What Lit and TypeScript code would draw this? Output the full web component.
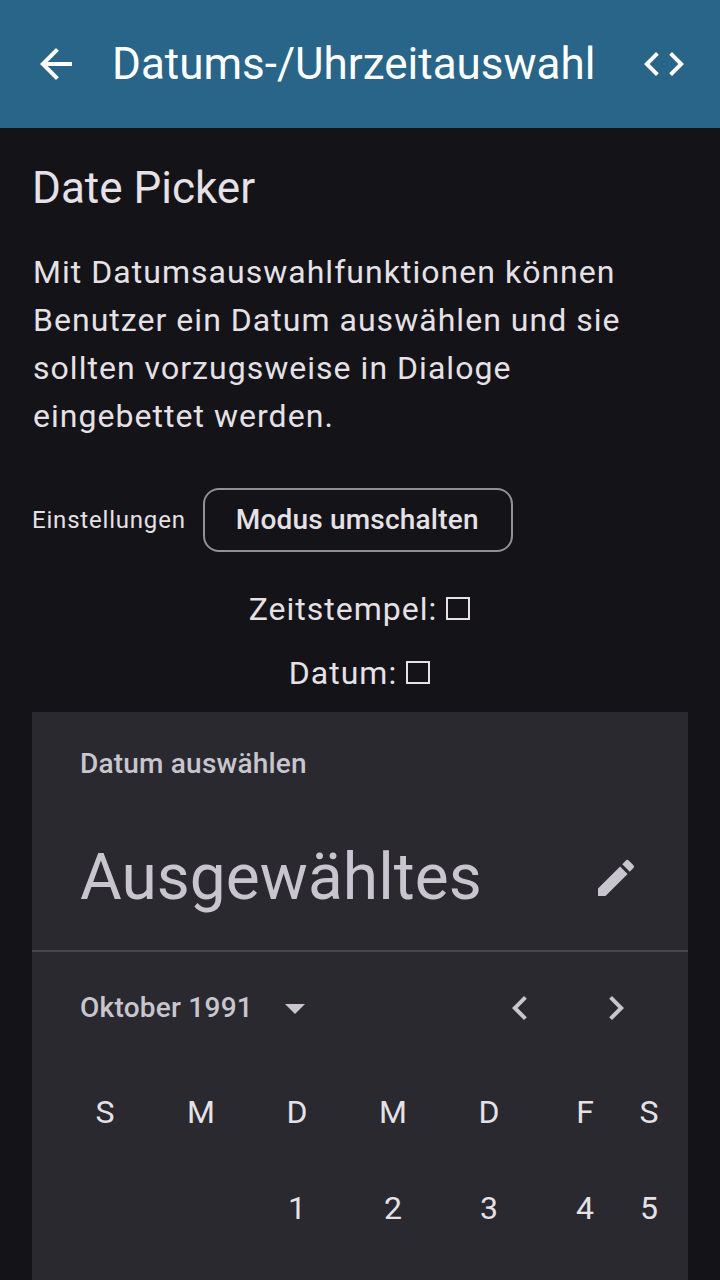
import { LitElement, html, css } from "lit";
import { customElement } from "lit/decorators.js";

@customElement("app-bar")
class AppBar extends LitElement {
  static styles = css`
    :host {
      display: flex;
      align-items: center;
      height: 128px;
      padding: 0 32px;
      box-sizing: border-box;
      background: #296588;
      color: #fff;
    }
    .icon { width: 48px; height: 48px; fill: currentColor; flex: none; }
    .title {
      flex: 1;
      margin: 0 0 0 32px;
      font-size: 44px;
      line-height: 56px;
      font-weight: 400;
      white-space: nowrap;
    }
  `;
  render() {
    return html`
      <svg class="icon" viewBox="0 0 24 24"><path d="M20 11H7.83l5.59-5.59L12 4l-8 8 8 8 1.41-1.41L7.83 13H20v-2z" /></svg>
      <h1 class="title">Datums-/Uhrzeitauswahl</h1>
      <svg class="icon" viewBox="0 0 24 24"><path d="M9.4 16.6 4.8 12l4.6-4.6L8 6l-6 6 6 6 1.4-1.4zm5.2 0 4.6-4.6-4.6-4.6L16 6l6 6-6 6-1.4-1.4z" /></svg>
    `;
  }
}

@customElement("date-picker")
class DatePicker extends LitElement {
  static styles = css`
    :host {
      display: flex;
      flex-direction: column;
      background: #2a292f;
      color: #c9c5ce;
    }
    .head {
      height: 238px;
      padding: 32px 48px 0;
      box-sizing: border-box;
    }
    .label { font-size: 28px; line-height: 40px; font-weight: 500; letter-spacing: 0.2px; }
    .chosen {
      display: flex;
      align-items: center;
      justify-content: space-between;
      margin-top: 54px;
      height: 80px;
    }
    .headline { font-size: 64px; line-height: 80px; letter-spacing: 0.05px; }
    .icon { width: 48px; height: 48px; fill: currentColor; flex: none; }
    .rule { height: 2px; background: #48464c; }
    .nav {
      display: flex;
      align-items: center;
      height: 112px;
      padding: 0 48px;
    }
    .month { font-size: 28px; line-height: 40px; font-weight: 500; letter-spacing: 0.25px; }
    .caret { margin-left: 18px; }
    .arrows { display: flex; gap: 48px; margin-left: auto; }
    .grid {
      display: grid;
      grid-template-columns: repeat(6, 96px) 32px;
      grid-auto-rows: 96px;
      padding: 0 24px;
      color: #e5e1e6;
      font-size: 32px;
    }
    .cell { display: flex; align-items: center; justify-content: center; padding-left: 2px; }
  `;
  days = ["S", "M", "D", "M", "D", "F", "S", "", "", "1", "2", "3", "4", "5"];
  render() {
    return html`
      <div class="head">
        <div class="label">Datum auswählen</div>
        <div class="chosen">
          <div class="headline">Ausgewähltes</div>
          <svg class="icon" viewBox="0 0 24 24"><path d="M3 17.25V21h3.75L17.81 9.94l-3.75-3.75L3 17.25zM20.71 7.04a.996.996 0 0 0 0-1.41l-2.34-2.34a.996.996 0 0 0-1.41 0l-1.83 1.83 3.75 3.75 1.83-1.83z" /></svg>
        </div>
      </div>
      <div class="rule"></div>
      <div class="nav">
        <span class="month">Oktober 1991</span>
        <svg class="icon caret" viewBox="0 0 24 24"><path d="M7 10l5 5 5-5z" /></svg>
        <div class="arrows">
          <svg class="icon" viewBox="0 0 24 24"><path d="M15.41 7.41 14 6l-6 6 6 6 1.41-1.41L10.83 12z" /></svg>
          <svg class="icon" viewBox="0 0 24 24"><path d="M10 6 8.59 7.41 13.17 12l-4.58 4.59L10 18l6-6z" /></svg>
        </div>
      </div>
      <div class="grid">${this.days.map((d) => html`<div class="cell">${d}</div>`)}</div>
    `;
  }
}

@customElement("app-root")
class AppRoot extends LitElement {
  static styles = css`
    :host {
      display: flex;
      flex-direction: column;
      width: 720px;
      height: 1280px;
      overflow: hidden;
      background: #141318;
      color: #e5e1e6;
      font-family: Roboto, sans-serif;
    }
    app-bar { flex: none; }
    .content { display: flex; flex-direction: column; flex: 1; padding: 32px 32px 0; }
    .heading { margin: 0; font-size: 44px; line-height: 56px; font-weight: 400; }
    .text { margin: 32px 0 0; padding-left: 1px; font-size: 32px; line-height: 48px; letter-spacing: 1.03px; }
    .settings { display: flex; align-items: center; gap: 17px; margin-top: 48px; height: 64px; }
    .caption { font-size: 24px; line-height: 32px; letter-spacing: 0.8px; }
    .button {
      height: 64px;
      width: 310px;
      padding: 0 1px 0 0;
      box-sizing: border-box;
      border: 2px solid #929096;
      border-radius: 16px;
      background: none;
      color: inherit;
      font: 500 28px/40px Roboto, sans-serif;
      letter-spacing: 0.2px;
    }
    .values { display: flex; flex-direction: column; gap: 16px; margin: 33px 0 15px; }
    .value {
      display: flex;
      justify-content: center;
      align-items: center;
      font-size: 32px;
      line-height: 48px;
      letter-spacing: 1px;
    }
    .box { width: 24px; height: 23px; margin: 0 1px 2px 9px; box-sizing: border-box; border: 2px solid; }
    date-picker { flex: 1; }
  `;
  render() {
    return html`
      <app-bar></app-bar>
      <main class="content">
        <h2 class="heading">Date Picker</h2>
        <p class="text">Mit Datumsauswahlfunktionen können Benutzer ein Datum auswählen und sie sollten vorzugsweise in Dialoge eingebettet werden.</p>
        <div class="settings">
          <span class="caption">Einstellungen</span>
          <button class="button">Modus umschalten</button>
        </div>
        <div class="values">
          <div class="value">Zeitstempel:<span class="box"></span></div>
          <div class="value">Datum:<span class="box"></span></div>
        </div>
        <date-picker></date-picker>
      </main>
    `;
  }
}
